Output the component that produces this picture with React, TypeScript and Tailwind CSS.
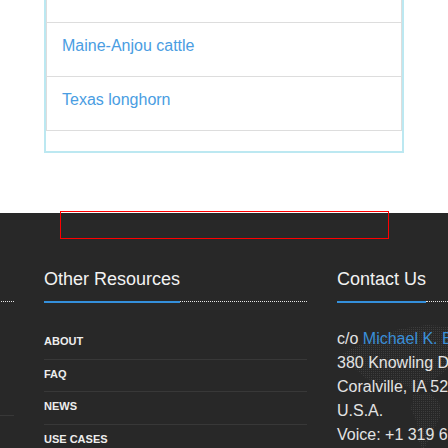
import React from 'react';

const breeds = ['Maine-Anjou cattle', 'Texas longhorn'];
const resources = ['About', 'FAQ', 'News', 'Use Cases'];

function Heading({ children }: { children?: React.ReactNode }) {
  return (
    <div className="flex">
      <h3 className="h-[34px] whitespace-nowrap border-b-2 border-[#3490dc] pb-3 text-[18px] font-normal leading-[20px] text-[#f2f2f2]">
        {children}
      </h3>
      <div className="mb-px flex-1 border-b border-dotted border-[#e6e6e6]" />
    </div>
  );
}

function WorldMap() {
  return (
    <svg className="absolute left-0 top-[54px]" width="263" height="140" viewBox="0 0 263 140">
      <defs>
        <pattern id="dots" width="2" height="2" patternUnits="userSpaceOnUse">
          <rect width="1" height="1" fill="#3d3d3d" />
        </pattern>
      </defs>
      <path
        d="M6 30 L22 22 L44 14 L62 6 L90 2 L118 4 L132 10 L128 26 L118 38 L108 48 L98 56 L88 62 L80 72 L72 64 L58 58 L44 60 L30 56 L18 46 Z"
        fill="url(#dots)"
      />
      <path d="M76 72 L92 70 L102 78 L104 92 L98 104 L92 116 L86 128 L82 118 L80 100 L74 86 Z" fill="url(#dots)" />
      <path d="M140 6 L156 2 L170 8 L162 20 L148 22 Z" fill="url(#dots)" />
    </svg>
  );
}

export default function App() {
  return (
    <div className="h-[448px] w-[448px] overflow-hidden bg-white font-['Liberation_Sans',Arial,sans-serif]">
      <div className="mx-[44px] -mt-[34px] mb-[60px] border-2 border-[#bce8f1] bg-white">
        <ul className="mb-5 border-x border-t border-[#ddd]">
          {/* row above the fold, its text is out of view */}
          <li className="h-[54px] border-b border-[#ddd]" />
          {breeds.map((b) => (
            <li
              key={b}
              className="border-b border-[#ddd] px-[15px] pb-[19px] pt-[11px] text-[16px] leading-[23px] text-[#4a9de2]"
            >
              {b}
            </li>
          ))}
        </ul>
      </div>

      <footer className="flow-root min-h-[260px] bg-[#282828]">
        <div className="-mt-[2px] ml-[60px] h-[28px] w-[329px] border border-[#ff0000]" />

        <div className="-ml-[249px] mt-[30px] flex gap-[30px]">
          <div className="w-[263px] shrink-0">
            <Heading />
            <div className="mt-6 h-[89px] border-b border-[#383838]" />
          </div>

          <div className="w-[263px] shrink-0">
            <Heading>Other Resources</Heading>
            <ul className="mt-6">
              {resources.map((r) => (
                <li
                  key={r}
                  className="border-b border-[#383838] pb-[9px] pt-[7px] text-[11px] font-bold uppercase leading-[15.5px] text-[#eeeeee]"
                >
                  {r}
                </li>
              ))}
            </ul>
          </div>

          <div className="relative w-[263px] shrink-0">
            <Heading>Contact Us</Heading>
            <WorldMap />
            <div className="relative mt-6 whitespace-nowrap text-[16px] leading-[24px] text-[#e3e3e3]">
              c/o <a className="text-[#3a8fd9]">Michael K. Bowen</a>
              <br />
              380 Knowling Dr.
              <br />
              Coralville, IA 52241
              <br />
              U.S.A.
              <br />
              Voice: +1 319 626 2550
            </div>
          </div>
        </div>
      </footer>
    </div>
  );
}
